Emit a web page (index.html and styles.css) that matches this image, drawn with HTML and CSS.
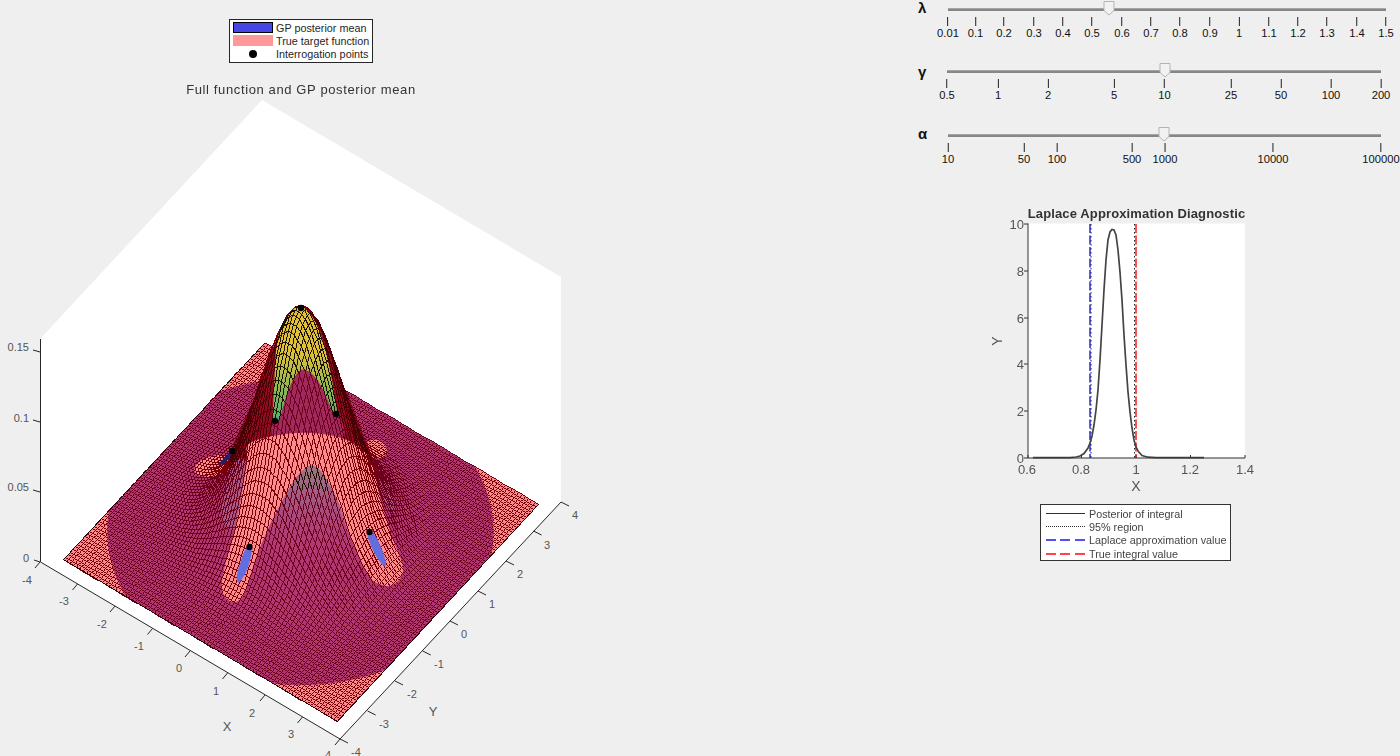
FILE: index.html
```html
<!DOCTYPE html>
<html lang="en">
<head>
<meta charset="utf-8">
<title>GP posterior and Laplace diagnostic</title>
<link rel="stylesheet" href="styles.css">
</head>
<body>
<main class="app">
  <section class="surface-panel">
    <div class="stage">
      <svg class="axes" width="600" height="756" viewBox="0 0 600 756">
        <polygon class="wall" points="40,339 262,100 561,277 561,502 340,739 40,562"/>
        <path class="axis-line" d="M40.5 339V562L340 739L561 502"/>
        <path class="axis-line" d="M40 352l-7 -2M40 422l-7 -2M40 492l-7 -2M40 562l-6 -2"/>
        <path class="axis-line" d="M40 562l-5 6M77.500 584l-5 6M115 606l-5 6M152.500 628.500l-5 6M190 651l-5 6M227.500 673l-5 6M265 695l-5 6M302.500 717l-5 6M340 739l-5 6"/>
        <path class="axis-line" d="M340 739l8 4M367.600 711l8 4M395 681l8 4M422.700 651l8 4M450 621l8 4M478 591l8 4M506 561l8 4M533.500 531l8 4M561 502l8 4"/>
        <g class="tick-text end">
          <text x="29" y="351">0.15</text><text x="29" y="422">0.1</text><text x="29" y="491">0.05</text><text x="29" y="562">0</text>
        </g>
        <g class="tick-text">
          <text x="27" y="584">-4</text><text x="64" y="605">-3</text><text x="102" y="628">-2</text><text x="139" y="650">-1</text><text x="179" y="672">0</text><text x="216" y="695">1</text><text x="252" y="717">2</text><text x="291" y="738">3</text><text x="328" y="759">4</text>
          <text x="356" y="756">-4</text><text x="384" y="728">-3</text><text x="412" y="698">-2</text><text x="439" y="668">-1</text><text x="464" y="638">0</text><text x="492" y="608">1</text><text x="520" y="578">2</text><text x="547" y="549">3</text><text x="575" y="519">4</text>
        </g>
        <g class="axis-name">
          <text x="227" y="731">X</text><text x="433" y="716">Y</text>
        </g>
      </svg>
      <canvas id="surface" class="surface" width="600" height="756"></canvas>
    </div>
    <div class="surface-legend">
      <div class="legend-row"><span class="swatch swatch-blue"></span><span>GP posterior mean</span></div>
      <div class="legend-row"><span class="swatch swatch-pink"></span><span>True target function</span></div>
      <div class="legend-row"><span class="swatch swatch-dot"><i></i></span><span>Interrogation points</span></div>
    </div>
    <h2 class="surface-title">Full function and GP posterior mean</h2>
  </section>

  <section class="controls">
    <div class="slider slider-lambda">
      <div class="slider-label">λ</div>
      <div class="slider-body">
        <div class="rail"><svg class="thumb" style="left:161px" width="12" height="15" viewBox="0 0 12 15"><path d="M1 .5H11V9.500L6 14L1 9.500Z"/></svg></div>
        <div class="ticks">
          <div class="tick" style="left:0px"><i></i><span>0.01</span></div>
          <div class="tick" style="left:27.500px"><i></i><span>0.1</span></div>
          <div class="tick" style="left:56px"><i></i><span>0.2</span></div>
          <div class="tick" style="left:86px"><i></i><span>0.3</span></div>
          <div class="tick" style="left:115px"><i></i><span>0.4</span></div>
          <div class="tick" style="left:144px"><i></i><span>0.5</span></div>
          <div class="tick" style="left:174px"><i></i><span>0.6</span></div>
          <div class="tick" style="left:203px"><i></i><span>0.7</span></div>
          <div class="tick" style="left:232px"><i></i><span>0.8</span></div>
          <div class="tick" style="left:262px"><i></i><span>0.9</span></div>
          <div class="tick" style="left:291px"><i></i><span>1</span></div>
          <div class="tick" style="left:321px"><i></i><span>1.1</span></div>
          <div class="tick" style="left:350px"><i></i><span>1.2</span></div>
          <div class="tick" style="left:379px"><i></i><span>1.3</span></div>
          <div class="tick" style="left:409px"><i></i><span>1.4</span></div>
          <div class="tick" style="left:438px"><i></i><span>1.5</span></div>
        </div>
      </div>
    </div>
    <div class="slider slider-gamma">
      <div class="slider-label">γ</div>
      <div class="slider-body">
        <div class="rail"><svg class="thumb" style="left:218px" width="12" height="15" viewBox="0 0 12 15"><path d="M1 .5H11V9.500L6 14L1 9.500Z"/></svg></div>
        <div class="ticks">
          <div class="tick" style="left:0px"><i></i><span>0.5</span></div>
          <div class="tick" style="left:51px"><i></i><span>1</span></div>
          <div class="tick" style="left:101px"><i></i><span>2</span></div>
          <div class="tick" style="left:167px"><i></i><span>5</span></div>
          <div class="tick" style="left:217.500px"><i></i><span>10</span></div>
          <div class="tick" style="left:284px"><i></i><span>25</span></div>
          <div class="tick" style="left:334px"><i></i><span>50</span></div>
          <div class="tick" style="left:384px"><i></i><span>100</span></div>
          <div class="tick" style="left:434px"><i></i><span>200</span></div>
        </div>
      </div>
    </div>
    <div class="slider slider-alpha">
      <div class="slider-label">α</div>
      <div class="slider-body">
        <div class="rail"><svg class="thumb" style="left:216px" width="12" height="15" viewBox="0 0 12 15"><path d="M1 .5H11V9.500L6 14L1 9.500Z"/></svg></div>
        <div class="ticks">
          <div class="tick" style="left:0px"><i></i><span>10</span></div>
          <div class="tick" style="left:76px"><i></i><span>50</span></div>
          <div class="tick" style="left:109px"><i></i><span>100</span></div>
          <div class="tick" style="left:184px"><i></i><span>500</span></div>
          <div class="tick" style="left:217px"><i></i><span>1000</span></div>
          <div class="tick" style="left:325px"><i></i><span>10000</span></div>
          <div class="tick" style="left:433px"><i></i><span>100000</span></div>
        </div>
      </div>
    </div>

    <div class="diagnostic">
      <svg class="diag-plot" width="290" height="300" viewBox="980 204 290 300">
        <text class="diag-title" x="1136.500" y="218">Laplace Approximation Diagnostic</text>
        <rect class="plot-bg" x="1028" y="223.500" width="217" height="234"/>
        <line class="v-blue" x1="1090" y1="224" x2="1090" y2="458"/>
        <line class="v-dots" x1="1091" y1="224" x2="1091" y2="458"/>
        <line class="v-red" x1="1136" y1="224" x2="1136" y2="458"/>
        <line class="v-dots" x1="1134.500" y1="224" x2="1134.500" y2="458"/>
        <path class="posterior" d="M1033 457.700L1070 457.600L1076 457L1080 456L1084 453.500L1088 448L1090 443L1092 436L1094 425L1096 410L1098 390L1100 360L1102 325L1104 290L1106 260L1108 240L1110 232L1112 229.500L1114 230L1116 235L1118 250L1120 272L1122 300L1124 335L1126 365L1128 392L1130 412L1132 428L1134 440L1136 447L1138 451L1142 455.500L1148 457.200L1156 457.600L1204 457.700"/>
        <path class="diag-axis" d="M1028 224H1024M1028 271H1024M1028 318H1024M1028 364H1024M1028 411H1024M1028 458H1024"/>
        <path class="diag-axis" d="M1028 223.500V458H1245M1081.500 458V455M1136 458V455M1190.500 458V455M1245 458V455M1028 458V455"/>
        <g class="diag-ticks end">
          <text x="1024" y="228.500">10</text><text x="1024" y="275.500">8</text><text x="1024" y="322.500">6</text><text x="1024" y="368.500">4</text><text x="1024" y="415.500">2</text><text x="1024" y="462.500">0</text>
        </g>
        <g class="diag-ticks">
          <text x="1027" y="474">0.6</text><text x="1081" y="474">0.8</text><text x="1136" y="474">1</text><text x="1190" y="474">1.2</text><text x="1245" y="474">1.4</text>
        </g>
        <text class="diag-name" x="1136" y="491">X</text>
        <text class="diag-name" transform="translate(1002 341) rotate(-90)" x="0" y="0">Y</text>
      </svg>
      <div class="diag-legend">
        <div class="legend-row"><span class="sample sample-solid"></span><span>Posterior of integral</span></div>
        <div class="legend-row"><span class="sample sample-dots"></span><span>95% region</span></div>
        <div class="legend-row"><span class="sample sample-blue"></span><span>Laplace approximation value</span></div>
        <div class="legend-row"><span class="sample sample-red"></span><span>True integral value</span></div>
      </div>
    </div>
  </section>
</main>
<script src="script.js"></script>
</body>
</html>
```
FILE: styles.css
```css
* { box-sizing: border-box; }
html, body { margin: 0; height: 100%; }
body {
  background: #efefef;
  font-family: "Liberation Sans", Arial, sans-serif;
  overflow: hidden;
}
.app { display: flex; width: 1400px; height: 756px; overflow: hidden; }

/* left: 3D surface */
.surface-panel { position: relative; flex: 0 0 910px; height: 756px; padding-top: 19px; }
.stage { position: absolute; inset: 0; }
.axes, .surface { position: absolute; left: 0; top: 0; }
.wall { fill: #fff; }
.axis-line { fill: none; stroke: #262626; stroke-width: 1; }
.tick-text text { font-size: 11px; fill: #555; text-anchor: middle; }
.tick-text.end text { text-anchor: end; }
.axis-name text { font-size: 13px; fill: #555; text-anchor: middle; }

.surface-legend {
  position: relative;
  width: 144px;
  height: 44px;
  margin-left: 229px;
  padding: 1px 3px;
  background: #fff;
  border: 1px solid #262626;
  font-size: 10.800px;
  color: #262626;
}
.legend-row { display: flex; align-items: center; height: 13.300px; white-space: nowrap; }
.swatch { display: flex; justify-content: center; align-items: center; flex: 0 0 40px; height: 11px; margin-right: 3px; }
.swatch-blue { background: #4646e6; border: 1px solid #000; }
.swatch-pink { background: #ff9999; }
.swatch-dot i { display: block; width: 8px; height: 8px; border-radius: 50%; background: #000; }
.surface-title {
  position: relative;
  margin: 19px 0 0;
  width: 602px;
  text-align: center;
  font-size: 13px;
  line-height: 15px;
  font-weight: 400;
  letter-spacing: .62px;
  color: #333;
}

/* right: sliders */
.controls { flex: 1; min-width: 0; }
.slider { display: flex; height: 40px; }
.slider-label { flex: 0 0 38px; padding-left: 8px; font-size: 15px; line-height: 16px; font-weight: 700; color: #111; }
.slider-gamma { margin-top: 22px; }
.slider-gamma .slider-label { flex-basis: 37px; padding-top: 2px; }
.slider-alpha { margin-top: 24px; }
.slider-lambda .slider-body { width: 438px; }
.slider-gamma .slider-body { width: 434px; }
.slider-alpha .slider-body { width: 433px; }
.rail {
  position: relative;
  height: 3px;
  margin-top: 8px;
  background: #868686;
  border-top: 1px solid #a5a5a5;
}
.thumb { position: absolute; top: -8px; margin-left: -6px; }
.thumb path { fill: #f2f2f2; stroke: #b4b4b4; stroke-width: 1; }
.ticks { position: relative; height: 23px; margin-top: 6px; }
.tick {
  position: absolute;
  top: 0;
  display: flex;
  flex-direction: column;
  align-items: center;
  transform: translateX(-50%);
  font-size: 11.200px;
  line-height: 13px;
  color: #111;
  white-space: nowrap;
}
.tick i { display: block; width: 1px; height: 9px; margin-bottom: 1px; background: #222; }

/* right: diagnostic */
.diagnostic { margin-top: 38px; margin-left: 70px; filter: blur(.45px); }
.diag-plot { display: block; }
.diag-title { font-size: 13px; font-weight: 700; letter-spacing: .13px; fill: #333; text-anchor: middle; }
.plot-bg { fill: #fff; }
.diag-axis { fill: none; stroke: #333; stroke-width: 1; }
.diag-ticks text { font-size: 13px; fill: #555; text-anchor: middle; }
.diag-ticks.end text { text-anchor: end; }
.diag-name { font-size: 14px; fill: #555; text-anchor: middle; }
.posterior { fill: none; stroke: #444; stroke-width: 1.700; }
.v-dots { stroke: #222; stroke-width: 1; stroke-dasharray: 1.500 2.500; }
.v-blue { stroke: #4a4af5; stroke-width: 1.800; stroke-dasharray: 9 2.500; }
.v-red { stroke: #ff3c3c; stroke-width: 1.800; stroke-dasharray: 9 2.500; }
.diag-legend {
  width: 191px;
  height: 57px;
  margin-left: 60px;
  padding: 2px 4px;
  background: #fff;
  border: 1px solid #333;
  font-size: 10.800px;
  color: #444;
}
.sample { flex: 0 0 39px; height: 0; margin: 0 4px 0 1px; border-top: 1px solid #333; }
.sample-dots { border-top: 1px dotted #333; }
.sample-blue { height: 2px; border: 0; background: repeating-linear-gradient(90deg, #5050f5 0 10px, transparent 10px 14.500px); }
.sample-red { height: 2px; border: 0; background: repeating-linear-gradient(90deg, #ff4545 0 10px, transparent 10px 14.500px); }
```
FILE: script.js
```js
(function () {
  var W = 600, H = 756;
  var canvas = document.getElementById('surface');
  var ctx = canvas.getContext('2d');

  var mc = document.createElement('canvas');
  mc.width = W; mc.height = H;
  var m = mc.getContext('2d');

  function height(x, y) {
    var r2 = x * x + y * y;
    return 0.16 * Math.exp(-r2 / (2 * 0.95 * 0.95));
  }
  function proj(x, y, z) {
    return [300.4 + 37.5 * x + 27.6 * y, 531.6 + 22.1 * x - 29.7 * y - 1400 * z];
  }
  function blob(c, pts, fill) {
    c.beginPath();
    var n = pts.length;
    var s = [(pts[n - 1][0] + pts[0][0]) / 2, (pts[n - 1][1] + pts[0][1]) / 2];
    c.moveTo(s[0], s[1]);
    for (var i = 0; i < n; i++) {
      var p = pts[i], q = pts[(i + 1) % n];
      c.quadraticCurveTo(p[0], p[1], (p[0] + q[0]) / 2, (p[1] + q[1]) / 2);
    }
    c.closePath();
    c.fillStyle = fill;
    c.fill();
  }
  function vgrad(c, y0, y1, stops) {
    var g = c.createLinearGradient(0, y0, 0, y1);
    stops.forEach(function (s) { g.addColorStop(s[0], s[1]); });
    return g;
  }

  // colour regions, in screen coordinates
  m.fillStyle = '#ff8c8c';
  m.fillRect(0, 0, W, H);

  m.beginPath();
  for (var t = 0; t < 120; t++) {
    var a = t / 120 * Math.PI * 2;
    var p = proj(4.15 * Math.cos(a), 4.15 * Math.sin(a), 0);
    if (t === 0) m.moveTo(p[0], p[1]); else m.lineTo(p[0], p[1]);
  }
  m.closePath();
  m.fillStyle = '#b23874';
  m.fill();

  // pink blobs beside the peak
  m.fillStyle = '#ff8c8c';
  m.beginPath(); m.ellipse(214, 466, 20, 10, -0.25, 0, Math.PI * 2); m.fill();
  m.beginPath(); m.ellipse(376, 449, 11, 9, 0.4, 0, Math.PI * 2); m.fill();

  // dark flank of the peak
  blob(m, [[301, 303], [285, 316], [275, 343], [261, 380], [248, 413], [232, 445], [226, 480], [375, 480], [372, 457], [359, 423], [342, 380], [329, 335], [316, 314]], '#920a20');
  // between the legs
  blob(m, [[305, 360], [285, 395], [262, 445], [355, 445], [330, 400]], '#a02a5e');

  // hazy shoulders of the "A"
  blob(m, [[230, 462], [248, 456], [248, 492], [238, 535], [218, 520]], '#aa5a88');
  blob(m, [[368, 460], [385, 466], [398, 515], [388, 510]], '#aa5a88');

  // pink "A"
  blob(m, [[245, 443], [275, 435], [303, 432], [335, 435], [359, 445], [372, 460], [378, 490], [385, 517], [395, 545], [406, 572], [393, 587], [379, 585], [369, 578], [355, 548], [342, 517], [326, 480], [312, 465], [298, 473], [277, 510], [265, 535], [254, 562], [244, 598], [232, 604], [220, 592], [225, 563], [235, 533], [243, 487], [248, 457]], '#ff8c8c');
  // pale apex between the fingers
  blob(m, [[312, 460], [330, 482], [350, 530], [352, 560], [262, 560], [268, 530], [292, 482]], vgrad(m, 466, 560, [[0, '#a07484'], [0.35, '#a05a84'], [1, 'rgba(178,56,116,0)']]));

  // GP mean poking through
  blob(m, [[301, 303], [290, 312], [282, 323], [276, 343], [274, 390], [272, 423], [279, 423], [287, 392], [297, 372], [305, 368], [317, 378], [327, 398], [335, 418], [338, 416], [335, 397], [327, 353], [317, 323], [307, 310]],
    vgrad(m, 310, 420, [[0, '#e8c030'], [0.4, '#dcc038'], [0.7, '#90b850'], [1, '#50b070']]));

  var base = m.getImageData(0, 0, W, H).data;
  var out = ctx.createImageData(W, H);
  var px = out.data;

  function setFill(x, y) {
    if (x < 0 || y < 0 || x >= W || y >= H) return;
    var i = (y * W + x) * 4;
    px[i] = base[i]; px[i + 1] = base[i + 1]; px[i + 2] = base[i + 2]; px[i + 3] = 255;
  }
  function setLine(x, y) {
    if (x < 0 || y < 0 || x >= W || y >= H) return;
    var i = (y * W + x) * 4, r = base[i], g = base[i + 1];
    var c;
    if (g > r * 0.6) c = [28, 18, 0];
    else if (r > 200) c = [122, 0, 8];
    else if (r > 155) c = [110, 0, 26];
    else c = [72, 0, 4];
    px[i] = c[0]; px[i + 1] = c[1]; px[i + 2] = c[2]; px[i + 3] = 255;
  }
  function line(a, b, plot) {
    var x0 = Math.round(a[0]), y0 = Math.round(a[1]), x1 = Math.round(b[0]), y1 = Math.round(b[1]);
    var dx = Math.abs(x1 - x0), dy = -Math.abs(y1 - y0);
    var sx = x0 < x1 ? 1 : -1, sy = y0 < y1 ? 1 : -1, err = dx + dy;
    for (var guard = 0; guard < 2000; guard++) {
      plot(x0, y0);
      if (x0 === x1 && y0 === y1) break;
      var e2 = 2 * err;
      if (e2 >= dy) { err += dy; x0 += sx; }
      if (e2 <= dx) { err += dx; y0 += sy; }
    }
  }
  function tri(a, b, c) {
    var minX = Math.floor(Math.min(a[0], b[0], c[0])), maxX = Math.ceil(Math.max(a[0], b[0], c[0]));
    var minY = Math.floor(Math.min(a[1], b[1], c[1])), maxY = Math.ceil(Math.max(a[1], b[1], c[1]));
    var d = (b[1] - c[1]) * (a[0] - c[0]) + (c[0] - b[0]) * (a[1] - c[1]);
    if (Math.abs(d) < 1e-6) return;
    for (var y = minY; y <= maxY; y++) {
      for (var x = minX; x <= maxX; x++) {
        var l1 = ((b[1] - c[1]) * (x - c[0]) + (c[0] - b[0]) * (y - c[1])) / d;
        var l2 = ((c[1] - a[1]) * (x - c[0]) + (a[0] - c[0]) * (y - c[1])) / d;
        var l3 = 1 - l1 - l2;
        if (l1 >= -0.02 && l2 >= -0.02 && l3 >= -0.02) setFill(x, y);
      }
    }
  }

  // mesh, painted from back to front
  var N = 84, S = 3.65, step = 2 * S / N, quads = [], pts = [];
  for (var i = 0; i <= N; i++) {
    pts[i] = [];
    for (var j = 0; j <= N; j++) {
      var x = -S + i * step, y = -S + j * step;
      pts[i][j] = proj(x, y, height(x, y));
    }
  }
  for (i = 0; i < N; i++) {
    for (j = 0; j < N; j++) {
      var cx = -S + (i + 0.5) * step, cy = -S + (j + 0.5) * step;
      quads.push([22.1 * cx - 29.7 * cy, i, j]);
    }
  }
  quads.sort(function (a, b) { return a[0] - b[0]; });
  quads.forEach(function (q) {
    var a = pts[q[1]][q[2]], b = pts[q[1] + 1][q[2]], c = pts[q[1] + 1][q[2] + 1], d = pts[q[1]][q[2] + 1];
    tri(a, b, c);
    tri(a, c, d);
    line(a, b, setLine); line(b, c, setLine); line(c, d, setLine); line(d, a, setLine);
  });

  // outline of the sheet
  function dark(x, y) {
    if (x < 0 || y < 0 || x >= W || y >= H) return;
    var i = (y * W + x) * 4;
    px[i] = 40; px[i + 1] = 0; px[i + 2] = 10; px[i + 3] = 255;
  }
  line(pts[0][0], pts[N][0], dark);
  line(pts[N][0], pts[N][N], dark);
  line(pts[0][N], pts[0][0], dark);
  ctx.putImageData(out, 0, 0);

  // GP mean slivers and interrogation points
  blob(ctx, [[246, 547], [253, 547], [249, 566], [243, 578], [238, 584], [236, 577], [241, 560]], '#626ee0');
  blob(ctx, [[366, 531], [373, 531], [381, 546], [387, 565], [384, 567], [377, 558], [371, 547]], '#626ee0');
  blob(ctx, [[217, 466], [226, 456], [234, 449], [232, 455], [224, 464]], '#20206a');
  ctx.fillStyle = '#000';
  [[249.500, 547], [369.500, 532], [232, 451], [275, 421], [336, 414], [301, 308]].forEach(function (d) {
    ctx.beginPath(); ctx.arc(d[0], d[1], 3.2, 0, Math.PI * 2); ctx.fill();
  });
})();
```
